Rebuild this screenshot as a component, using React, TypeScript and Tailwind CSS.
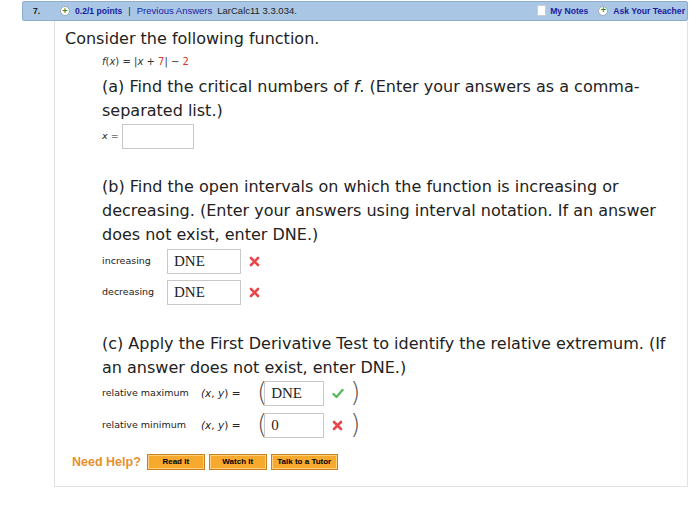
import React from "react";

const V = { fontFamily: '"DejaVu Sans", Verdana, sans-serif' };
const A = { fontFamily: '"Liberation Sans", Arial, sans-serif' };
const S = { fontFamily: '"Liberation Serif", "Times New Roman", serif' };

function Plus() {
  return (
    <span className="inline-flex items-center justify-center w-[10px] h-[10px] rounded-full bg-white border border-[#9ab] mr-[5px]">
      <span className="text-[#2a8a2a] text-[9px] leading-none font-bold">+</span>
    </span>
  );
}

function XMark() {
  return (
    <svg width="11" height="11" viewBox="0 0 11 11">
      <path d="M2 2 L9 9 M9 2 L2 9" stroke="#e8474a" strokeWidth="2.6" strokeLinecap="round" />
    </svg>
  );
}

function Check() {
  return (
    <svg width="12" height="11" viewBox="0 0 12 11">
      <path d="M1.5 6 L4.5 9 L10.5 2" stroke="#5bb85b" strokeWidth="2.4" fill="none" strokeLinecap="round" strokeLinejoin="round" />
    </svg>
  );
}

function Box({ w, val }: { w: number; val?: string }) {
  return (
    <div
      className="h-[25px] border border-[#c8c8c8] bg-white flex items-center pl-[6px] text-[15px] text-[#222]"
      style={{ ...S, width: w }}
    >
      {val}
    </div>
  );
}

function Btn({ label, w }: { label: string; w: number }) {
  return (
    <div
      className="h-[16px] bg-[#f7a92e] border border-[#c9801c] flex items-center justify-center text-[8px] font-bold text-black shadow-[inset_0_0_0_1px_#fcd07c]"
      style={{ ...A, width: w }}
    >
      {label}
    </div>
  );
}

function Paren({ c }: { c: string }) {
  return (
    <span className="h-[25px] leading-[23px] text-[26px] font-extralight text-[#555] overflow-visible">{c}</span>
  );
}

export default function App() {
  return (
    <div className="w-[700px] h-[507px] bg-white relative overflow-hidden">
      {/* header */}
      <div className="ml-[22px] mt-[1px] w-[666px] h-[20px] bg-[#a9c7e5] border border-[#8eaccc] rounded-[2px] flex items-center text-[8.6px] font-bold" style={A}>
        <span className="ml-[10px] w-[27px] text-[#222]">7.</span>
        <Plus />
        <span className="text-[#1a1aa0]">0.2/1 points</span>
        <span className="mx-[6px] font-normal text-[#333] text-[9.5px]">|</span>
        <span className="font-normal text-[#1a1aa0] text-[9.5px]">Previous Answers</span>
        <span className="ml-[5px] font-normal text-[#222] text-[9.5px]">LarCalc11 3.3.034.</span>
        <span className="ml-auto flex items-center">
          <span className="w-[9px] h-[11px] bg-white border border-[#ccc] mr-[4px]" />
          <span className="text-[#1a1aa0] mr-[10px]">My Notes</span>
          <Plus />
          <span className="text-[#1a1aa0] mr-[2px]">Ask Your Teacher</span>
        </span>
      </div>

      {/* panel */}
      <div className="ml-[54px] w-[634px] h-[466px] border-l border-r border-b border-[#e2e2e2] text-[#222]" style={V}>
        <div className="pl-[10px] pt-[6px] text-[16px] leading-[24px]">Consider the following function.</div>
        <div className="pl-[47px]">
          <div className="text-[10px] leading-[16px] mt-[3px] text-[#333]">
            <i>f</i>(<i>x</i>) = |<i>x</i> + <span className="text-[#d33]">7</span>| − <span className="text-[#d33]">2</span>
          </div>
          <div className="text-[16px] leading-[24px] mt-[5px] pr-[30px]">
            (a) Find the critical numbers of <i>f</i>. (Enter your answers as a comma-separated list.)
          </div>
          <div className="flex items-center mt-[1px] text-[9.5px]">
            <span className="w-[20px]"><i>x</i> =</span>
            <Box w={72} />
          </div>

          <div className="text-[16px] leading-[24px] mt-[26px] pr-[20px]">
            (b) Find the open intervals on which the function is increasing or decreasing. (Enter your answers using interval notation. If an answer does not exist, enter DNE.)
          </div>
          <div className="flex items-center mt-[2px] text-[9.5px]">
            <span className="w-[65px]">increasing</span>
            <Box w={74} val="DNE" />
            <span className="ml-[8px]"><XMark /></span>
          </div>
          <div className="flex items-center mt-[6px] text-[9.5px]">
            <span className="w-[65px]">decreasing</span>
            <Box w={74} val="DNE" />
            <span className="ml-[8px]"><XMark /></span>
          </div>

          <div className="text-[16px] leading-[24px] mt-[27px] pr-[20px]">
            (c) Apply the First Derivative Test to identify the relative extremum. (If an answer does not exist, enter DNE.)
          </div>
          <div className="flex items-center h-[25px] mt-[1px] text-[9.5px]">
            <span className="w-[99px]">relative maximum</span>
            <span className="text-[10.5px] w-[56px]"><i>(x</i>, <i>y</i>) =</span>
            <Paren c="(" />
            <span className="ml-[-3px]"><Box w={60} val="DNE" /></span>
            <span className="ml-[8px] w-[14px]"><Check /></span>
            <span className="ml-[4px]"><Paren c=")" /></span>
          </div>
          <div className="flex items-center h-[25px] mt-[7px] text-[9.5px]">
            <span className="w-[99px]">relative minimum</span>
            <span className="text-[10.5px] w-[56px]"><i>(x</i>, <i>y</i>) =</span>
            <Paren c="(" />
            <span className="ml-[-3px]"><Box w={60} val="0" /></span>
            <span className="ml-[8px] w-[14px]"><XMark /></span>
            <span className="ml-[4px]"><Paren c=")" /></span>
          </div>
        </div>
        <div className="flex items-center pl-[17px] mt-[15px]" style={A}>
          <span className="text-[12.5px] font-bold text-[#e8902e] mr-[6px]">Need Help?</span>
          <div className="flex gap-[4px]">
            <Btn label="Read It" w={58} />
            <Btn label="Watch It" w={58} />
            <Btn label="Talk to a Tutor" w={67} />
          </div>
        </div>
      </div>
    </div>
  );
}
